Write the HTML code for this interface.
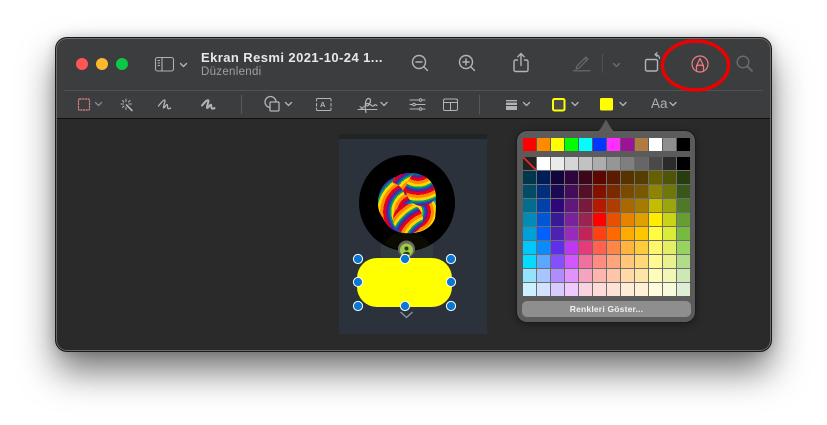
<!DOCTYPE html>
<html lang="tr">
<head>
<meta charset="utf-8">
<title>Ekran Resmi</title>
<style>
html,body{margin:0;padding:0;background:#fff}
body{width:827px;height:425px;position:relative;overflow:hidden;font-family:"Liberation Sans",sans-serif}
.win{position:absolute;left:56px;top:38px;width:715px;height:313px;border-radius:11px;background:#2a2a2a;box-shadow:0 0 0 1px #1a1a1a,0 20px 36px rgba(0,0,0,.55),0 0 12px rgba(0,0,0,.22);overflow:hidden}
.win:after{content:"";position:absolute;inset:0;border-radius:11px;box-shadow:inset 0 0 0 1px #6a6a6a}
.bar{position:absolute;left:0;top:0;width:715px;height:80px;background:#3c3d3f;border-bottom:1px solid #0f0f0f}
.t1{position:absolute;left:201px;top:50px;font-size:13px;font-weight:bold;color:#e8e8e8;letter-spacing:.42px;white-space:nowrap}
.t2{position:absolute;left:201px;top:66px;font-size:11.5px;color:#a0a0a0;letter-spacing:.3px;white-space:nowrap}
svg.o{position:absolute;left:0;top:0}
.panel{position:absolute;left:517px;top:131px;width:178px;height:191px;border-radius:10px;background:#5b5b5b;box-shadow:0 0 0 1px #1c1c1c,0 2px 8px rgba(0,0,0,.45)}
.r{position:absolute;left:522.5px;display:grid;grid-template-columns:repeat(12,13px);gap:1px}
.r i{display:block;height:13px}
.grid{top:157px;background:#6d6d6d;padding:0}
.top{top:138px}
.btn{position:absolute;left:522px;top:301px;width:169px;height:16px;border-radius:5px;background:#8e8e8e;color:#f2f2f2;font-size:8.5px;font-weight:bold;line-height:16px;text-align:center;letter-spacing:.2px}
.aa{position:absolute;left:651px;top:96px;font-size:13.5px;color:#b0b0b0}
.A{position:absolute;left:320px;top:100px;font-size:7.5px;color:#b4b4b4;font-weight:bold}
</style>
</head>
<body>
<div class="win"><div class="bar"></div></div>

<svg class="o" width="827" height="425" viewBox="0 0 827 425" fill="none">
<defs>
<radialGradient id="g1" gradientUnits="userSpaceOnUse" cx="414" cy="212" r="14" spreadMethod="repeat"><stop offset="0" stop-color="#e8001b"/><stop offset=".2" stop-color="#e8001b"/><stop offset=".2" stop-color="#ff8a00"/><stop offset=".42" stop-color="#ff8a00"/><stop offset=".42" stop-color="#ffd800"/><stop offset=".62" stop-color="#ffd800"/><stop offset=".62" stop-color="#0c9a6a"/><stop offset=".74" stop-color="#0c9a6a"/><stop offset=".74" stop-color="#1450b4"/><stop offset=".86" stop-color="#1450b4"/><stop offset=".86" stop-color="#6a1a8c"/><stop offset="1" stop-color="#6a1a8c"/></radialGradient>
<radialGradient id="g2" gradientUnits="userSpaceOnUse" cx="418" cy="164" r="14" spreadMethod="repeat"><stop offset="0" stop-color="#e8001b"/><stop offset=".2" stop-color="#e8001b"/><stop offset=".2" stop-color="#ff8a00"/><stop offset=".42" stop-color="#ff8a00"/><stop offset=".42" stop-color="#ffd800"/><stop offset=".62" stop-color="#ffd800"/><stop offset=".62" stop-color="#0c9a6a"/><stop offset=".74" stop-color="#0c9a6a"/><stop offset=".74" stop-color="#1450b4"/><stop offset=".86" stop-color="#1450b4"/><stop offset=".86" stop-color="#6a1a8c"/><stop offset="1" stop-color="#6a1a8c"/></radialGradient>
<radialGradient id="g3" gradientUnits="userSpaceOnUse" cx="436" cy="250" r="14" spreadMethod="repeat"><stop offset="0" stop-color="#6a1a8c"/><stop offset=".14" stop-color="#6a1a8c"/><stop offset=".14" stop-color="#1450b4"/><stop offset=".26" stop-color="#1450b4"/><stop offset=".26" stop-color="#0c9a6a"/><stop offset=".38" stop-color="#0c9a6a"/><stop offset=".38" stop-color="#ffd800"/><stop offset=".58" stop-color="#ffd800"/><stop offset=".58" stop-color="#ff8a00"/><stop offset=".8" stop-color="#ff8a00"/><stop offset=".8" stop-color="#e8001b"/><stop offset="1" stop-color="#e8001b"/></radialGradient>
<radialGradient id="g4" gradientUnits="userSpaceOnUse" cx="418" cy="198" r="14" spreadMethod="repeat"><stop offset="0" stop-color="#e8001b"/><stop offset=".2" stop-color="#e8001b"/><stop offset=".2" stop-color="#ff8a00"/><stop offset=".42" stop-color="#ff8a00"/><stop offset=".42" stop-color="#ffd800"/><stop offset=".62" stop-color="#ffd800"/><stop offset=".62" stop-color="#0c9a6a"/><stop offset=".74" stop-color="#0c9a6a"/><stop offset=".74" stop-color="#1450b4"/><stop offset=".86" stop-color="#1450b4"/><stop offset=".86" stop-color="#6a1a8c"/><stop offset="1" stop-color="#6a1a8c"/></radialGradient>
<clipPath id="ball"><path d="M378 203C378 190 385 180 396 177C402 172 414 172 421 175C431 178 436 188 436 198C436 206 436 212 435 218C432 228 420 234 408 233C395 234 386 226 383 218C379 213 378 208 378 203Z"/></clipPath>
</defs>

<!-- separators -->
<path d="M64 90.5H763" stroke="#505153"/>
<path d="M241.5 95V114M479.5 95V114" stroke="#58595b"/>
<path d="M602.5 54V73" stroke="#505153"/>

<!-- traffic lights -->
<circle cx="82" cy="64" r="6" fill="#fc5753"/>
<circle cx="102" cy="64" r="6" fill="#fdb92c"/>
<circle cx="122" cy="64" r="6" fill="#0bc944"/>

<!-- sidebar -->
<g stroke="#b0b0b0" stroke-width="1.1">
<rect x="155.5" y="57.5" width="18" height="13.5" rx="2"/>
<path d="M162 57.5V71"/>
<path d="M157.5 60.5H160M157.5 63H160M157.5 65.5H160"/>
</g>
<g stroke="#b4b4b4" stroke-width="1.4" stroke-linecap="round" stroke-linejoin="round">
<path d="M180.5 63.5L183.5 66.5L186.5 63.5"/>
<!-- zoom out -->
<circle cx="419" cy="62" r="6.5"/><path d="M416 62H422M424 67L427.5 70.5"/>
<!-- zoom in -->
<circle cx="466" cy="62" r="6.5"/><path d="M463 62H469M466 59V65M471 67L474.5 70.5"/>
<!-- share -->
<path d="M517.5 60H515.5A1.5 1.5 0 0 0 514 61.5V70A1.5 1.5 0 0 0 515.5 71.5H526.5A1.5 1.5 0 0 0 528 70V61.5A1.5 1.5 0 0 0 526.5 60H524.5"/>
<path d="M521 65.5V54M517.8 56.8L521 53.5L524.2 56.8"/>
<!-- rotate -->
<rect x="645.5" y="59.5" width="12" height="11.5" rx="1.5"/>
<path d="M655 54.5C657.5 54.5 659.5 56 659.5 58.5M655 54.5L657 52.6M655 54.5L657 56.4" stroke-width="1.2"/>
</g>

<!-- dim highlight + chevron + search -->
<g stroke="#6d6e70" stroke-width="1.1" stroke-linecap="round" stroke-linejoin="round">
<path d="M577 66L576 69L579 68L588 59L586 57ZM584.5 58.5L586.5 60.5"/>
<path d="M573.5 70.8H590"/>
<path d="M613.5 63.5L616.5 66.5L619.5 63.5" stroke-width="1.3"/>
<circle cx="743" cy="62" r="5.8" stroke-width="1.3"/><path d="M747.5 66.5L752 71" stroke-width="1.6"/>
</g>

<!-- markup -->
<g stroke="#f37c84" stroke-width="1.2" stroke-linejoin="round" stroke-linecap="round">
<circle cx="700" cy="64" r="8"/>
<path d="M696.5 70.5L696.5 66L700 58.5L703.5 66L703.5 70.5"/>
<path d="M696.5 66C698 64.8 702 64.8 703.5 66"/>
</g>
<ellipse cx="695.5" cy="65.5" rx="33" ry="24.5" stroke="#ee0000" stroke-width="3.4"/>

<!-- toolbar row 2 -->
<rect x="78.5" y="99" width="11" height="11" rx="1" stroke="#e8848c" stroke-width="1.2" stroke-dasharray="2 .7"/>
<g stroke="#b4b4b4" stroke-width="1.3" stroke-linecap="round" stroke-linejoin="round">
<path d="M95.5 102.5L98.5 105.5L101.5 102.5" stroke="#8a8a8a"/>
<!-- wand -->
<path d="M126.5 105L132 110.5" stroke-width="1.6"/>
<path d="M126 99V101.5M121 104H123.5M122.5 100.5L124 102M130 100.5L128.5 102M122.5 107.5L124 106M131.5 104H129M126 107.5V109.5" stroke-width="1"/>
<!-- sketch -->
<path d="M158.5 106C161 103 163 100 164.5 100C166 100 163.5 105 163.5 107.5C163.5 109.5 166 104.5 167 104.5C168 104.5 167 108 168 108.5C169 109 170 108.5 170.5 108"/>
<!-- draw -->
<path d="M202 105.5C204.5 102.5 206.5 100 208 100.2C209.5 100.5 206.8 105 207 107.5C207.2 109.5 209.8 104.5 210.8 104.7C211.8 105 210.8 108 212 108.5C213 108.8 214 108.5 214.5 108" stroke-width="2"/>
<!-- shapes -->
<circle cx="270.5" cy="102" r="5.5"/>
<rect x="270" y="102" width="9" height="9" rx="1" fill="#3c3d3f"/>
<path d="M285.5 102.5L288.5 105.5L291.5 102.5M381 102.5L384 105.5L387 102.5"/>
<!-- text box -->
<path d="M316.5 101V99.5A1 1 0 0 1 317.5 98.5H330A1 1 0 0 1 331 99.5V101M331 103.5V106M331 108V109.5A1 1 0 0 1 330 110.5H317.5A1 1 0 0 1 316.5 109.5V108M316.5 106V103.5" stroke-width="1"/>
<!-- signature -->
<path d="M358 109.5H377" stroke-width="1"/>
<path d="M360 106.5L364 109.5M364 106.5L360 109.5" stroke-width="1"/>
<path d="M366 112.5C364 104 366 98 369 98.5C372 99.2 370 104 368 105.5C366 107 364.5 104 367 103.5C370 103 372 107 373.5 106C374.5 105 375 104 377 105.5" stroke-width="1.2"/>
<!-- adjust -->
<path d="M410 100H425M410 104.5H425M410 109H425" stroke-width="1"/>
<circle cx="420.5" cy="100" r="1.3" fill="#3c3d3f" stroke-width="1"/>
<circle cx="414" cy="104.5" r="1.3" fill="#3c3d3f" stroke-width="1"/>
<circle cx="420.5" cy="109" r="1.3" fill="#3c3d3f" stroke-width="1"/>
<!-- layout -->
<rect x="443.5" y="99" width="14" height="11.5" rx="1.5" stroke-width="1"/>
<path d="M443.5 102.5H457.5M450.5 102.5V110.5" stroke-width="1"/>
<!-- chevrons -->
<path d="M523.5 102.5L526.5 105.5L529.5 102.5M572 102.5L575 105.5L578 102.5M620 102.5L623 105.5L626 102.5M670 102.5L673 105.5L676 102.5"/>
</g>
<!-- lines -->
<rect x="506" y="100" width="11" height="1.4" fill="#b4b4b4"/>
<rect x="506" y="102.6" width="11" height="2.4" fill="#b4b4b4"/>
<rect x="506" y="106" width="11" height="4" fill="#b4b4b4"/>
<!-- border colour / fill colour -->
<rect x="553" y="99" width="11.5" height="11.5" rx="1.5" fill="#4a4a4a" stroke="#ffff00" stroke-width="2"/>
<rect x="600" y="98" width="13" height="12.5" rx="1.5" fill="#ffff00"/>

<!-- image -->
<rect x="339" y="134" width="148" height="5" fill="#202423"/>
<rect x="339" y="139" width="148" height="195" fill="#2b323b"/>
<circle cx="407" cy="250" r="26.5" fill="#333c40"/>
<circle cx="407" cy="203" r="48" fill="#000"/>
<path d="M384 243.5A48 48 0 0 0 430 245A26.5 26.5 0 0 0 384 243.5Z" fill="#0b0b00"/>
<!-- rainbow ball -->
<g clip-path="url(#ball)">
<rect x="375" y="170" width="65" height="66" fill="url(#g1)"/>
<circle cx="405" cy="183" r="12" fill="url(#g4)"/>
<ellipse cx="392" cy="203" rx="14" ry="20" fill="url(#g1)"/>
<ellipse cx="422" cy="189" rx="16" ry="17" fill="url(#g2)"/>
<ellipse cx="426" cy="222" rx="11" ry="12" fill="url(#g1)"/>
<circle cx="408" cy="219" r="15" fill="url(#g3)"/>
</g>
<!-- person badge -->
<circle cx="406.5" cy="249" r="8.5" fill="#6a6a5e"/>
<circle cx="406.5" cy="250" r="6.5" fill="#9fcc44"/>
<circle cx="406.5" cy="248.5" r="2" fill="#2a3a20"/>
<path d="M403 254.5C403 251 410 251 410 254.5Z" fill="#2a3a20"/>
<!-- yellow shape -->
<rect x="357" y="258" width="95" height="49" rx="20" fill="#ffff00"/>
<g fill="#0a78d2" stroke="#fff" stroke-width="1">
<circle cx="358" cy="259" r="4.6"/><circle cx="405" cy="259" r="4.6"/><circle cx="451" cy="259" r="4.6"/>
<circle cx="358" cy="282" r="4.6"/><circle cx="451" cy="282" r="4.6"/>
<circle cx="358" cy="306" r="4.6"/><circle cx="405" cy="306" r="4.6"/><circle cx="451" cy="306" r="4.6"/>
</g>
<path d="M400.5 312L406.5 317.5L412.5 312" stroke="#8d96a2" stroke-width="1.3"/>
</svg>

<div class="t1">Ekran Resmi 2021-10-24 1...</div>
<div class="t2">Düzenlendi</div>
<div class="A">A</div>
<div class="aa">Aa</div>

<div class="panel"></div>
<svg class="o" width="827" height="425" viewBox="0 0 827 425" fill="none"><path d="M596.5 131.5C600 131 601 128 606 119.5C611 128 612 131 615.5 131.5Z" fill="#5b5b5b"/></svg>

<div class="r top">
<i style="background:#ff0000"></i><i style="background:#ff8a00"></i><i style="background:#ffff00"></i><i style="background:#00ff00"></i><i style="background:#00ffff"></i><i style="background:#0037ff"></i><i style="background:#ff2eff"></i><i style="background:#9a1595"></i><i style="background:#b07a40"></i><i style="background:#ffffff"></i><i style="background:#8e8e8e"></i><i style="background:#000000"></i>
</div>
<div class="r grid">
<i style="background:linear-gradient(to top right,#222 46%,#e8262a 46%,#e8262a 54%,#222 54%)"></i><i style="background:#ffffff"></i><i style="background:#ebebeb"></i><i style="background:#d6d6d6"></i><i style="background:#c2c2c2"></i><i style="background:#adadad"></i><i style="background:#969696"></i><i style="background:#7f7f7f"></i><i style="background:#666666"></i><i style="background:#4a4a4a"></i><i style="background:#2b2b2b"></i><i style="background:#000000"></i>
<i style="background:#00374a"></i><i style="background:#011d57"></i><i style="background:#11053b"></i><i style="background:#2e063d"></i><i style="background:#3c071b"></i><i style="background:#5c0701"></i><i style="background:#5a1c00"></i><i style="background:#583300"></i><i style="background:#563d00"></i><i style="background:#666100"></i><i style="background:#4f5504"></i><i style="background:#263e0f"></i>
<i style="background:#004d65"></i><i style="background:#012f7b"></i><i style="background:#1a0a52"></i><i style="background:#450d59"></i><i style="background:#551029"></i><i style="background:#831100"></i><i style="background:#7b2900"></i><i style="background:#7a4a00"></i><i style="background:#785800"></i><i style="background:#8d8602"></i><i style="background:#6f760a"></i><i style="background:#38571a"></i>
<i style="background:#016e8f"></i><i style="background:#0042a9"></i><i style="background:#2c0977"></i><i style="background:#61187c"></i><i style="background:#791a3d"></i><i style="background:#b51a00"></i><i style="background:#ad3e00"></i><i style="background:#a96800"></i><i style="background:#a67b01"></i><i style="background:#c4bc00"></i><i style="background:#9ba50e"></i><i style="background:#4e7a27"></i>
<i style="background:#008cb4"></i><i style="background:#0056d6"></i><i style="background:#371a94"></i><i style="background:#7a219e"></i><i style="background:#99244f"></i><i style="background:#ff0000"></i><i style="background:#e85000"></i><i style="background:#e88300"></i><i style="background:#e0a000"></i><i style="background:#ffec00"></i><i style="background:#c8d414"></i><i style="background:#669d34"></i>
<i style="background:#00a1d8"></i><i style="background:#0061ff"></i><i style="background:#4d22b2"></i><i style="background:#982abc"></i><i style="background:#c02459"></i><i style="background:#ff4015"></i><i style="background:#ff6a00"></i><i style="background:#ffab01"></i><i style="background:#fdc700"></i><i style="background:#fffc41"></i><i style="background:#d9ec37"></i><i style="background:#76bb40"></i>
<i style="background:#01c7fc"></i><i style="background:#0a8cff"></i><i style="background:#5e30eb"></i><i style="background:#be38f3"></i><i style="background:#e63b7a"></i><i style="background:#ff6251"></i><i style="background:#ff8648"></i><i style="background:#feb43f"></i><i style="background:#fecb3e"></i><i style="background:#fff76b"></i><i style="background:#e4ef65"></i><i style="background:#96d35f"></i>
<i style="background:#01dcff"></i><i style="background:#5ca8ff"></i><i style="background:#864ffe"></i><i style="background:#d357fe"></i><i style="background:#ee719e"></i><i style="background:#ff8c82"></i><i style="background:#ffa57d"></i><i style="background:#ffc777"></i><i style="background:#ffd977"></i><i style="background:#fff994"></i><i style="background:#eaf28f"></i><i style="background:#b1dd8b"></i>
<i style="background:#93e3fd"></i><i style="background:#a7c6ff"></i><i style="background:#b18cfe"></i><i style="background:#e292fe"></i><i style="background:#f4a4c0"></i><i style="background:#ffb5af"></i><i style="background:#ffc5ab"></i><i style="background:#ffd9a8"></i><i style="background:#ffe4a8"></i><i style="background:#fffbb9"></i><i style="background:#f2f7b7"></i><i style="background:#cde8b5"></i>
<i style="background:#cbf0ff"></i><i style="background:#d2e2fe"></i><i style="background:#d8c9fe"></i><i style="background:#efcaff"></i><i style="background:#f9d3e0"></i><i style="background:#ffdbd8"></i><i style="background:#ffe2d6"></i><i style="background:#ffecd4"></i><i style="background:#fff1d5"></i><i style="background:#fefcdd"></i><i style="background:#f7fadb"></i><i style="background:#deeed4"></i>
</div>
<div class="btn">Renkleri Göster...</div>
</body>
</html>
